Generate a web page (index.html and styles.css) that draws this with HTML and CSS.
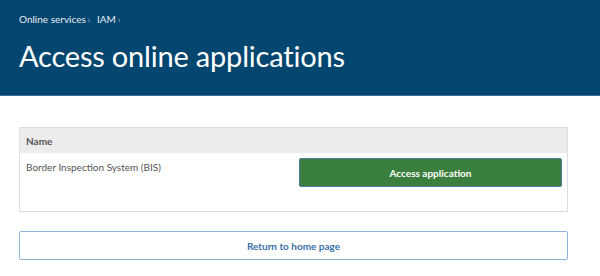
FILE: index.html
```html
<!DOCTYPE html>
<html lang="en">

<head>
  <meta charset="UTF-8">
  <meta name="viewport" content="width=device-width, initial-scale=1.0">
  <title>Access online applications</title>
  <link rel="stylesheet" href="styles.css">
</head>

<body>
  <header class="page-header">
    <nav class="breadcrumb">
      <a href="#">Online services</a><span class="sep">›</span>
      <a href="#">IAM</a><span class="sep">›</span>
    </nav>
    <h1>Access online applications</h1>
  </header>

  <main class="content">
    <table class="app-table">
      <thead>
        <tr>
          <th colspan="2">Name</th>
        </tr>
      </thead>
      <tbody>
        <tr>
          <td class="app-name">Border Inspection System (BIS)</td>
          <td class="app-action"><button type="button" class="btn-primary">Access application</button></td>
        </tr>
      </tbody>
    </table>

    <button type="button" class="btn-secondary">Return to home page</button>
  </main>
</body>
</html>
```

FILE: styles.css
```css
/* Page styles */

body {
  margin: 0;
  font-family: Lato, "Noto Sans", sans-serif;
  background-color: #fff;
  color: #555;
}

.page-header {
  background-color: #03466f;
  color: #fff;
  padding: 12px 19px 21px;
  border-bottom: 1px solid #3d6d8f;
}

.breadcrumb {
  font-size: 10px;
  line-height: 14px;
}

.breadcrumb a {
  color: #e6edf2;
  text-decoration: none;
}

.breadcrumb .sep {
  color: #9bb8cc;
  margin: 0 4px 0 2px;
  font-size: 9px;
}

h1 {
  margin: 11px 0 0;
  font-weight: 400;
  font-size: 29px;
  line-height: 36px;
  letter-spacing: -0.2px;
}

.content {
  padding: 31px 32px 0 19px;
}

.app-table {
  width: 100%;
  border-collapse: collapse;
  border: 1px solid #dedede;
  font-size: 10px;
}

.app-table th {
  background-color: #ececec;
  text-align: left;
  font-weight: 700;
  color: #555;
  height: 25px;
  padding: 0 6px;
}

.app-table td {
  vertical-align: top;
  height: 50px;
}

.app-name {
  padding: 8px 6px 0;
  color: #555;
}

.app-action {
  width: 263px;
  padding: 5px 5px 0 0;
}

.btn-primary {
  display: block;
  width: 100%;
  height: 29px;
  background-color: #3a7f3d;
  color: #fff;
  border: 1px solid #4a78a8;
  border-radius: 2px;
  font-family: inherit;
  font-size: 10px;
  font-weight: 700;
  cursor: pointer;
}

.btn-secondary {
  display: block;
  width: 100%;
  height: 29px;
  margin-top: 19px;
  background-color: #fff;
  color: #3a70a8;
  border: 1px solid #8fb4da;
  border-radius: 2px;
  font-family: inherit;
  font-size: 10px;
  font-weight: 700;
  cursor: pointer;
}
```
